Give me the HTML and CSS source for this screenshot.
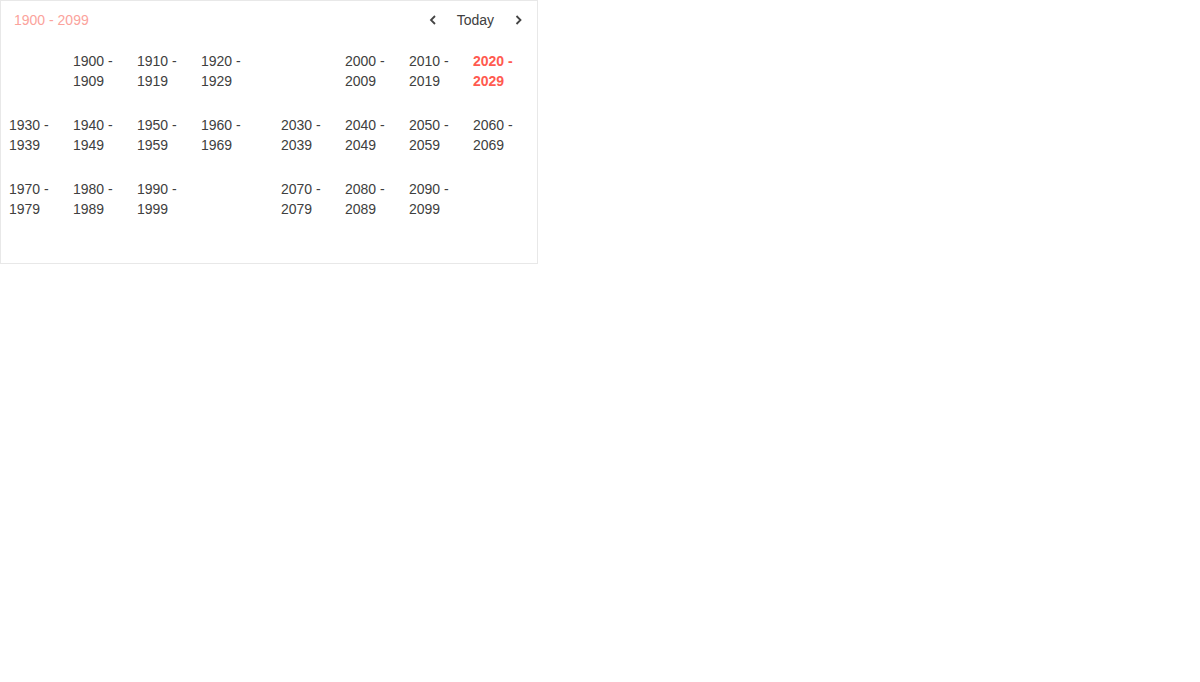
FILE: index.html
```html
<!DOCTYPE html>
<html>
<head>
<meta charset="utf-8">
<link rel="stylesheet" href="styles.css">
</head>
<body>
<div class="panel">
  <div class="header">
    <div class="title">1900 - 2099</div>
    <div class="nav">
      <span class="chev"><svg width="10" height="12" viewBox="0 0 10 12"><path d="M7 2 L3 6 L7 10" fill="none" stroke="#444" stroke-width="1.8"/></svg></span>
      <span class="today">Today</span>
      <span class="chev"><svg width="10" height="12" viewBox="0 0 10 12"><path d="M3.5 2 L7.5 6 L3.5 10" fill="none" stroke="#444" stroke-width="1.8"/></svg></span>
    </div>
  </div>
  <div class="body">
    <div class="grid">
      <div class="cell"></div>
      <div class="cell">1900 - 1909</div>
      <div class="cell">1910 - 1919</div>
      <div class="cell">1920 - 1929</div>
      <div class="cell">1930 - 1939</div>
      <div class="cell">1940 - 1949</div>
      <div class="cell">1950 - 1959</div>
      <div class="cell">1960 - 1969</div>
      <div class="cell">1970 - 1979</div>
      <div class="cell">1980 - 1989</div>
      <div class="cell">1990 - 1999</div>
      <div class="cell"></div>
    </div>
    <div class="grid">
      <div class="cell"></div>
      <div class="cell">2000 - 2009</div>
      <div class="cell">2010 - 2019</div>
      <div class="cell current">2020 - 2029</div>
      <div class="cell">2030 - 2039</div>
      <div class="cell">2040 - 2049</div>
      <div class="cell">2050 - 2059</div>
      <div class="cell">2060 - 2069</div>
      <div class="cell">2070 - 2079</div>
      <div class="cell">2080 - 2089</div>
      <div class="cell">2090 - 2099</div>
      <div class="cell"></div>
    </div>
  </div>
</div>
</body>
</html>
```
FILE: styles.css
```css
html, body {
  margin: 0;
  padding: 0;
  background: #fff;
}
body {
  font-family: "Liberation Sans", Arial, sans-serif;
  font-size: 14px;
  color: #404040;
}
.panel {
  width: 536px;
  height: 262px;
  border: 1px solid #e8e8e8;
}
.header {
  height: 38px;
  display: flex;
  align-items: center;
  justify-content: space-between;
  padding: 0 14px 0 13px;
  line-height: 20px;
}
.title {
  color: #fba39c;
}
.nav {
  display: flex;
  align-items: center;
}
.chev {
  display: flex;
  width: 10px;
  height: 12px;
}
.today {
  margin: 0 19px 0 19px;
}
.body {
  display: flex;
  gap: 16px;
  padding: 12px 0 0 8px;
}
.grid {
  display: grid;
  grid-template-columns: repeat(4, 64px);
  grid-auto-rows: 64px;
}
.cell {
  line-height: 20px;
  padding-right: 14px;
}
.current {
  color: #ff5a4f;
  font-weight: bold;
}
```
